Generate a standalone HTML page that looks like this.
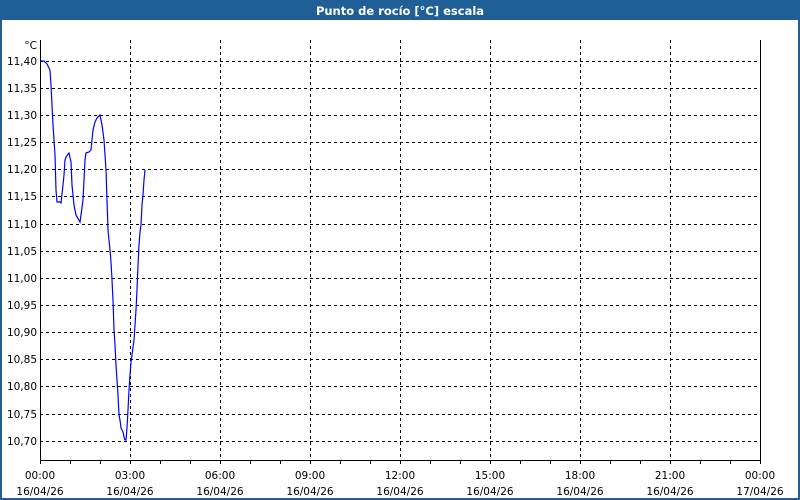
<!DOCTYPE html>
<html><head><meta charset="utf-8"><style>
html,body{margin:0;padding:0;background:#fff}
svg{display:block}
text{font-family:"DejaVu Sans","Liberation Sans",sans-serif;font-size:10.5px;fill:#000}
</style></head><body>
<svg width="800" height="500" viewBox="0 0 800 500" xmlns="http://www.w3.org/2000/svg">
<rect x="0" y="0" width="800" height="500" fill="#1f5f96"/>
<rect x="2" y="20" width="796" height="478" fill="#fff"/>
<text x="400" y="15" text-anchor="middle" style="font-weight:bold;font-size:11.5px;fill:#fff">Punto de rocío [°C] escala</text>
<g stroke="#000" stroke-width="1" stroke-dasharray="3,3" shape-rendering="crispEdges">
<path d="M40 61.5H760M40 88.5H760M40 115.5H760M40 142.5H760M40 169.5H760M40 196.5H760M40 224.5H760M40 251.5H760M40 278.5H760M40 305.5H760M40 332.5H760M40 359.5H760M40 386.5H760M40 414.5H760M40 441.5H760"/>
<path d="M130.5 40V460M220.5 40V460M310.5 40V460M400.5 40V460M490.5 40V460M580.5 40V460M670.5 40V460"/>
</g>
<g stroke="#000" stroke-width="1" fill="none" shape-rendering="crispEdges">
<path d="M40.5 40V460.5H760.5V40"/>
<path d="M70.5 460V464M100.5 460V464M130.5 460V464M160.5 460V464M190.5 460V464M220.5 460V464M250.5 460V464M280.5 460V464M310.5 460V464M340.5 460V464M370.5 460V464M400.5 460V464M430.5 460V464M460.5 460V464M490.5 460V464M520.5 460V464M550.5 460V464M580.5 460V464M610.5 460V464M640.5 460V464M670.5 460V464M700.5 460V464M730.5 460V464M760.5 460V464M40.5 460V464"/>
</g>
<polyline fill="none" stroke="#0000ff" stroke-width="1.2" points="40,61 44,61 47,64 50,70 51,85 52,105 53,125 54,140 55,155 56,190 57,202 60,202 61,203 63,185 64,175 65,160 66,157 69,153 71,162 72,185 74,205 76,215 80,222 81,215 83,200 85,160 86,153 89,152 91,150 92,140 93,130 95,122 97,118 100,115 102,125 104,140 106,170 107,200 108,230 110,250 111,262 112,280 113,300 114,330 115,345 116,365 117,380 118,395 119,415 120,420 121,428 123,432 124,437 125,440 126,440 127,428 128,410 129,390 130,375 131,362 132,355 134,340 136,310 137,290 138,265 139,245 140,232 141,225 142,205 143,195 144,180 145,170"/>
<g text-anchor="end">
<text x="37" y="49">°C</text>
<text x="37" y="65">11,40</text><text x="37" y="92">11,35</text><text x="37" y="119">11,30</text>
<text x="37" y="146">11,25</text><text x="37" y="173">11,20</text><text x="37" y="200">11,15</text>
<text x="37" y="228">11,10</text><text x="37" y="255">11,05</text><text x="37" y="282">11,00</text>
<text x="37" y="309">10,95</text><text x="37" y="336">10,90</text><text x="37" y="363">10,85</text>
<text x="37" y="390">10,80</text><text x="37" y="418">10,75</text><text x="37" y="445">10,70</text>
</g>
<g text-anchor="middle">
<text x="40" y="479">00:00</text><text x="40" y="495">16/04/26</text>
<text x="130" y="479">03:00</text><text x="130" y="495">16/04/26</text>
<text x="220" y="479">06:00</text><text x="220" y="495">16/04/26</text>
<text x="310" y="479">09:00</text><text x="310" y="495">16/04/26</text>
<text x="400" y="479">12:00</text><text x="400" y="495">16/04/26</text>
<text x="490" y="479">15:00</text><text x="490" y="495">16/04/26</text>
<text x="580" y="479">18:00</text><text x="580" y="495">16/04/26</text>
<text x="670" y="479">21:00</text><text x="670" y="495">16/04/26</text>
<text x="760" y="479">00:00</text><text x="760" y="495">17/04/26</text>
</g>
</svg>
</body></html>
